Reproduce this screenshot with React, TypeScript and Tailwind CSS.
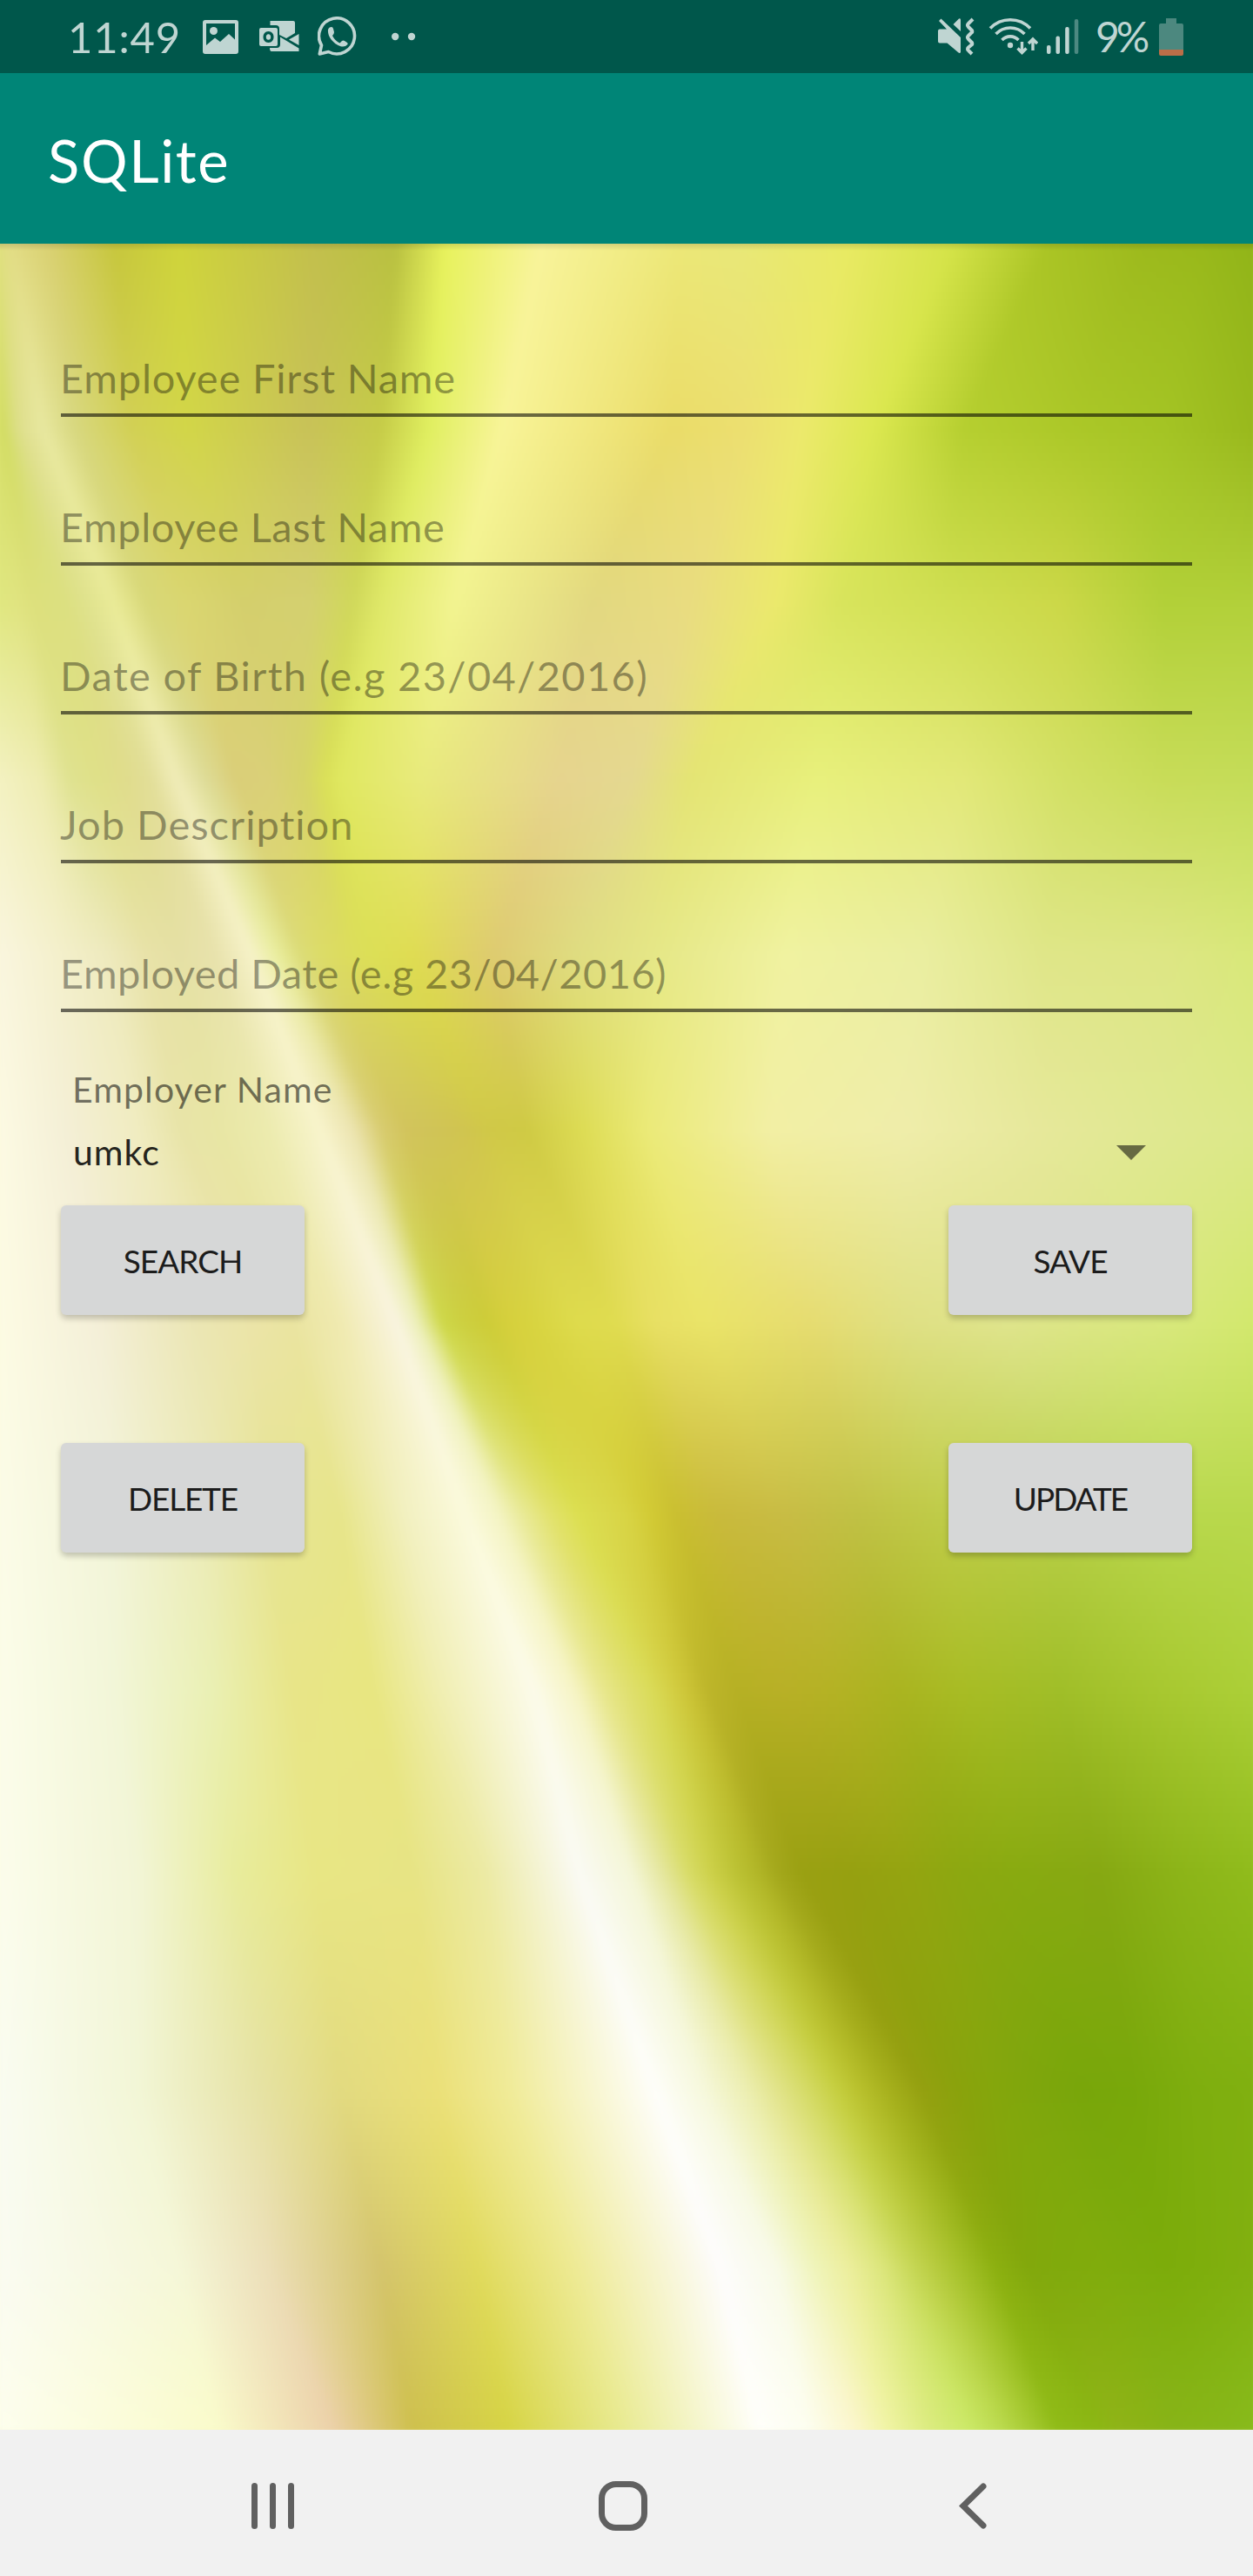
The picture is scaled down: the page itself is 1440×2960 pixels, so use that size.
import React from "react";

/* Leaf backdrop: every row lists the same set of colour tracks (x on a 1568 scale),
   and the strips between two rows interpolate both position and colour. */
type Row = { y: number; stops: string };

const ROWS: Row[] = [
  { y: 280, stops: "0 dde07a,2 dee07c,4 dee07c,6 dfe07e,8 e0e07e,11 e0de80,20 e2dc84,70 d9d070,150 c6c63c,230 cfd43a,400 c2bf4c,500 b8c040,560 e8f25c,680 f8f39a,850 ece878,920 e8e878,1060 e8ea62,1190 d4e348,1310 aac424,1430 9cb91c,1500 98b81a,1568 90b418" },
  { y: 500, stops: "0 d8e06c,8 d4de64,14 d2dc62,20 d6de70,26 dade80,38 e0e090,62 e8e8a0,100 d8d880,170 d2d055,240 d2d648,390 c8c258,480 c6cc48,540 e0ef60,630 f8f498,840 eadc68,930 ecdf70,1000 ece96c,1090 dce850,1200 b6cf30,1330 acc828,1450 a4c424,1568 98b81c" },
  { y: 700, stops: "0 e0e880,30 e0e480,50 dde07c,70 dce07e,90 dce080,115 dfe28c,150 eaeb98,190 d8d878,240 dad670,310 d4cf6c,390 d4d070,445 d0d85a,480 dfe868,570 f2f490,740 e2d880,860 e9dc80,970 ebe96c,1050 d8e45c,1180 d0df52,1320 ccd848,1450 b2d038,1568 b2d03a" },
  { y: 900, stops: "0 f4f2c4,60 eeecb0,95 dfe290,130 dfe088,165 e0dc8c,195 e2de98,227 f0ecb8,262 dedc98,300 dace78,340 dad078,385 d6d468,410 dae058,430 e0e860,530 e8ea7c,700 e6d48e,790 e4d890,860 e4e474,1020 e8f07c,1200 e2e878,1330 d2e064,1450 c8dc58,1568 c4dc58" },
  { y: 1100, stops: "0 faf6e0,80 f4f0cc,140 eeeabe,190 e8e2a8,230 e5e0a4,275 e8e2ac,320 f6f2c8,350 eaeea0,380 dcdc78,405 dcdc68,430 dcdc60,450 dcde5a,470 dcdf56,520 dfdc52,620 decb70,720 dfdc80,830 e6e888,980 f0f2a0,1150 eaeea0,1300 dfe688,1450 dde684,1568 d8e878" },
  { y: 1300, stops: "0 fdfbe4,90 f4efd6,180 f0ecc0,230 e8e4a8,280 e8e6a4,340 ecebae,405 f8f4cc,445 ece4b0,480 d8cc70,510 d2c45c,540 d0c458,560 d0c454,580 d0c450,610 d0c848,660 cfca44,730 dddc54,810 ebea78,960 f2efa4,1130 efedaa,1300 e6e89a,1450 dfe890,1568 dce888" },
  { y: 1520, stops: "0 fdfce4,130 f4efd8,250 ebe6b4,330 ebe4a6,370 eae4a0,430 f0eab0,500 f9f4e0,525 ecefb8,555 ced848,580 ccd040,610 cdcc38,640 d6d03c,670 d8d440,720 dedb4c,770 e0dc50,820 e8e064,880 eae468,1010 e6dc70,1130 dfe084,1250 dfe48c,1450 d8e87c,1568 d2e86c" },
  { y: 1740, stops: "0 fcfce8,150 f2f4d8,260 ecebb8,340 e6e494,430 e7e58a,510 f2f0c0,585 fbfadc,625 f4f4c4,655 e9ea98,690 e2e26c,725 dcdf50,755 dad94c,785 d8d444,815 d2ca34,845 cabf30,900 c9ba3c,980 c8bc44,1070 c0c144,1180 bfcc48,1330 b8d048,1460 b8d84c,1568 b8d84c" },
  { y: 1940, stops: "0 fcfdea,150 f2f6d8,270 eaf0b4,370 e8e588,470 e8e680,550 f0eeb0,670 fcfbea,720 f6f4c4,755 e8e78c,785 e0e070,815 dadb58,840 d4cf44,860 ccc436,885 bdb52a,920 b6b024,980 b8b026,1040 b4b224,1120 aab420,1200 a8bc24,1320 a0be28,1450 a8c830,1568 acd038" },
  { y: 2150, stops: "0 fcfdec,180 f2f5d6,300 e8ec9c,400 e8e684,520 e7e484,610 eceaa4,725 fafaf4,790 f4f6d8,830 e4e69c,860 d8dc68,890 ccd048,920 bcc234,945 b2b728,970 a4a81c,1000 9aa012,1060 96a010,1130 94a410,1200 8ca810,1270 88aa10,1370 86a812,1470 8cb418,1568 90bc1c" },
  { y: 2400, stops: "0 fafcf2,180 f2f6d6,330 e6e2a4,430 e2da80,550 ebe078,640 f0eb98,820 fefefa,880 f6f8dc,935 eceeb0,970 e2e48c,1010 d4da64,1045 c6cf40,1075 b8c02c,1110 a6b01c,1150 94a010,1195 8aa20c,1240 84a60c,1290 7ea60c,1350 78a60a,1410 78a80a,1490 7eae0e,1568 80b010" },
  { y: 2600, stops: "0 fafbf2,230 f5f7d8,340 ecdfb8,480 d4c46c,600 e0da5c,720 eeea94,900 fdfcfc,970 f8fae8,1020 eff4b8,1060 ecee9c,1100 dce67c,1135 c8d858,1165 b8cc40,1200 a4c028,1240 8cb010,1280 82a80c,1320 80aa0c,1370 80ac0c,1410 7eac0c,1450 7cac0a,1500 7eae0c,1568 82b010" },
  { y: 2792, stops: "0 fdfeee,280 fafbca,425 ecd0a8,520 cec04c,640 d6d444,780 e8ea90,950 fffffa,1010 fdfef0,1070 fcf6cc,1110 f0f4a4,1160 dcec80,1210 ccea68,1250 bcdc50,1285 a8cc34,1320 90bc18,1370 8cb814,1400 90b418,1430 8cb416,1460 88b418,1490 88b618,1530 88b81a,1568 88bc1c" },
];

const PARSED = ROWS.map((r) => ({
  y: r.y,
  stops: r.stops.split(",").map((s) => {
    const [x, c] = s.split(" ");
    return [+x / 15.68, parseInt(c.slice(0, 2), 16), parseInt(c.slice(2, 4), 16), parseInt(c.slice(4, 6), 16)];
  }),
}));

function gradientAt(y: number) {
  let i = 0;
  while (i < PARSED.length - 2 && PARSED[i + 1].y < y) i++;
  const a = PARSED[i];
  const b = PARSED[i + 1];
  const t = Math.min(1, Math.max(0, (y - a.y) / (b.y - a.y)));
  const parts = a.stops.map((s, k) => {
    const v = s.map((n, j) => n + (b.stops[k][j] - n) * t);
    return `rgb(${v[1].toFixed(1)} ${v[2].toFixed(1)} ${v[3].toFixed(1)}) ${v[0].toFixed(2)}%`;
  });
  return `linear-gradient(to right, ${parts.join(", ")})`;
}

const STRIPS = Array.from({ length: 314 }, (_, i) => gradientAt(284 + i * 8));

function Backdrop() {
  return (
    <div className="absolute inset-0 overflow-hidden bg-[#e4e68c]">
      <div className="absolute -inset-x-2 -inset-y-2 flex flex-col blur-[5px]">
        {STRIPS.map((g, i) => (
          <div key={i} className="flex-1" style={{ backgroundImage: g }} />
        ))}
      </div>
      <div className="absolute inset-x-0 top-0 h-2 bg-linear-to-b from-black/12 to-transparent" />
    </div>
  );
}

function StatusBar() {
  return (
    <div className="flex h-[84px] items-center bg-[#00574b] text-[#bfd5d2]">
      <span className="ml-[78px] w-[155px] text-[49px] leading-none tracking-[0.8px]">11:49</span>
      <svg className="h-[39px] w-[41px]" viewBox="0 0 41 39">
        <path fillRule="evenodd" fill="currentColor" d="M3 0H38Q41 0 41 3V36Q41 39 38 39H3Q0 39 0 36V3Q0 0 3 0ZM4 4V29L14 20.500L20 25L30 16L37 22.500V4Z" />
        <circle cx="12.500" cy="12.500" r="4.500" fill="currentColor" />
      </svg>
      <svg className="ml-[24px] h-[36px] w-[46px]" viewBox="0 0 46 36" fill="currentColor">
        <path d="M12.500 0H39Q41 0 41 2V14L31 20L23 16V9Q23 5 19 5H12.500Z" />
        <path d="M45.500 15V28L34 21.500Z" />
        <path d="M24 18.500L45.500 31.500V35H14Q12 35 12 31H20Q24 31 24 27Z" />
        <path fillRule="evenodd" d="M2 8H19Q21 8 21 10V27Q21 29 19 29H2Q0 29 0 27V10Q0 8 2 8ZM10.500 12C6.500 12 4.500 15 4.500 18.500S6.500 25 10.500 25S16.500 22 16.500 18.500S14.500 12 10.500 12ZM10.500 15.200C12.300 15.200 13.200 16.500 13.200 18.500S12.300 21.800 10.500 21.800S7.800 20.500 7.800 18.500S8.700 15.200 10.500 15.200Z" />
      </svg>
      <svg className="ml-[21px] h-[46px] w-[46px]" viewBox="0 0 46 46">
        <path fill="none" stroke="currentColor" strokeWidth="3.600" d="M2.300 43L4.500 33A20.500 20.500 0 1 1 12.500 40.500Z" strokeLinejoin="round" />
        <path fill="currentColor" d="M12 15Q13 12 16 12Q17.500 12 18 14L19 18Q19 20 17 22Q20 28 25.500 30.500L28 28Q29.500 27 31 28L34 30Q35 31 34.500 32Q32 35 28 34.500C20 33 11 24 12 15Z" />
      </svg>
      <svg className="ml-[39px] h-[10px] w-[28px]" viewBox="0 0 28 10" fill="currentColor">
        <circle cx="4.200" cy="5" r="4.200" />
        <circle cx="23" cy="5" r="4.200" />
      </svg>

      <svg className="ml-auto h-[44px] w-[43px]" viewBox="0 0 43 44">
        <path fill="currentColor" d="M3 13.500H11L2 4L4.500 1.500L27 23V40Q26 42 24 40L11.500 29.500H3Q1 29.500 1 27.500V15.500Q1 13.500 3 13.500ZM18.500 8L25 1.500Q27 .5 27 3V16Z" />
        <path fill="none" stroke="currentColor" strokeWidth="4" d="M41 2L36 7Q34 9 36 11L40 15Q41 17 39 18L36 21Q34 23 36 25L40 29Q41 31 39 32L36 34.500Q34 36.500 36 38L40 42" />
      </svg>
      <svg className="ml-[16px] h-[44px] w-[57px]" viewBox="0 0 57 44" fill="none" stroke="currentColor">
        <path strokeWidth="3.600" d="M2 12.500A32 32 0 0 1 48 12.500M8.500 19A23 23 0 0 1 41.500 19M15.500 26A13 13 0 0 1 34.500 26" />
        <circle cx="25" cy="32" r="3.200" fill="currentColor" stroke="none" />
        <path strokeWidth="3.400" d="M38.500 28V39M33.500 35.500L38.500 40.500L43.500 35.500M51 38V26M46 30L51 25L56 30" />
      </svg>
      <svg className="ml-[10px] h-[40px] w-[37px]" viewBox="0 0 37 40" fill="currentColor">
        <rect x="0" y="30" width="4.500" height="10" rx="2" />
        <rect x="10.500" y="19.500" width="4.500" height="20.500" rx="2" />
        <rect x="21.200" y="9" width="4.500" height="31" rx="2" />
        <rect x="31.800" y="0" width="4.500" height="40" rx="2" opacity=".4" />
      </svg>
      <span className="ml-[19px] w-[73px] text-[48px] leading-none tracking-[-4px]">9%</span>
      <svg className="mr-[80px] h-[43px] w-[28px]" viewBox="0 0 28 43">
        <path fill="#4c887f" d="M8 0H20V6H26Q28 6 28 8V36H0V8Q0 6 2 6H8Z" />
        <path fill="#bb6e48" d="M0 36H28V41Q28 43 26 43H2Q0 43 0 41Z" />
      </svg>
    </div>
  );
}

function Hint({ children, tracking }: { children: string; tracking: string }) {
  return (
    <div className="flex h-[171px] flex-col justify-end border-b-4 border-black/57 pb-[12px] text-black/38">
      <span className={"-ml-px text-[47px] leading-[58px] whitespace-nowrap " + tracking}>{children}</span>
    </div>
  );
}

function Button({ children, tracking }: { children: string; tracking: string }) {
  return (
    <button
      className={
        "flex h-[126px] w-[280px] items-center justify-center rounded-[6px] bg-[#d6d7d7] pt-[2px] text-[37px] text-[#1c1c1c] shadow-[0_4px_7px_rgba(0,0,0,0.22)] " +
        tracking
      }
    >
      {children}
    </button>
  );
}

export default function App() {
  return (
    <div className="flex h-[2960px] w-[1440px] flex-col overflow-hidden font-['Lato',sans-serif]">
      <StatusBar />
      <header className="flex h-[196px] items-center bg-[#008577] pt-[4px] pl-[55px] text-[67px] tracking-[1.6px] text-white">
        SQLite
      </header>

      <main className="relative h-[2512px]">
        <Backdrop />
        <div className="relative flex flex-col px-[70px] pt-[28px]">
          <Hint tracking="tracking-[0.8px]">Employee First Name</Hint>
          <Hint tracking="tracking-[0.55px]">Employee Last Name</Hint>
          <Hint tracking="tracking-[1.35px]">Date of Birth (e.g 23/04/2016)</Hint>
          <Hint tracking="tracking-[1px]">Job Description</Hint>
          <Hint tracking="tracking-[0.45px]">Employed Date (e.g 23/04/2016)</Hint>

          <div className="mt-[64px] pl-[13px] text-[41px] leading-[50px] tracking-[1.1px] text-black/54">Employer Name</div>
          <div className="mt-[22px] flex h-[50px] items-center justify-between pr-[53px] pl-[14px] text-[41px] leading-[50px] tracking-[1px] text-black/87">
            umkc
            <svg className="h-[17px] w-[34px] text-black/54" viewBox="0 0 34 17">
              <path d="M0 0H34L17 17Z" fill="currentColor" />
            </svg>
          </div>

          <div className="mt-[36px] flex justify-between">
            <Button tracking="tracking-[-1px]">SEARCH</Button>
            <Button tracking="tracking-[-1px]">SAVE</Button>
          </div>
          <div className="mt-[147px] flex justify-between">
            <Button tracking="tracking-[-1.2px]">DELETE</Button>
            <Button tracking="tracking-[-2px]">UPDATE</Button>
          </div>
        </div>
      </main>

      <nav className="flex h-[168px] items-center bg-[#f1f1f1] pt-[7px] pl-[289px] text-[#606060]">
        <div className="flex h-[53px] w-[49px] justify-between">
          <span className="w-[7px] rounded-full bg-current" />
          <span className="w-[7px] rounded-full bg-current" />
          <span className="w-[7px] rounded-full bg-current" />
        </div>
        <div className="ml-[350px] h-[57px] w-[56px] rounded-[20px] border-[7px] border-current" />
        <svg className="ml-[358px] h-[53px] w-[32px]" viewBox="0 0 32 53" fill="none" stroke="currentColor" strokeWidth="7" strokeLinecap="round">
          <path d="M28 4L5 26.500L28 49" />
        </svg>
      </nav>
    </div>
  );
}
